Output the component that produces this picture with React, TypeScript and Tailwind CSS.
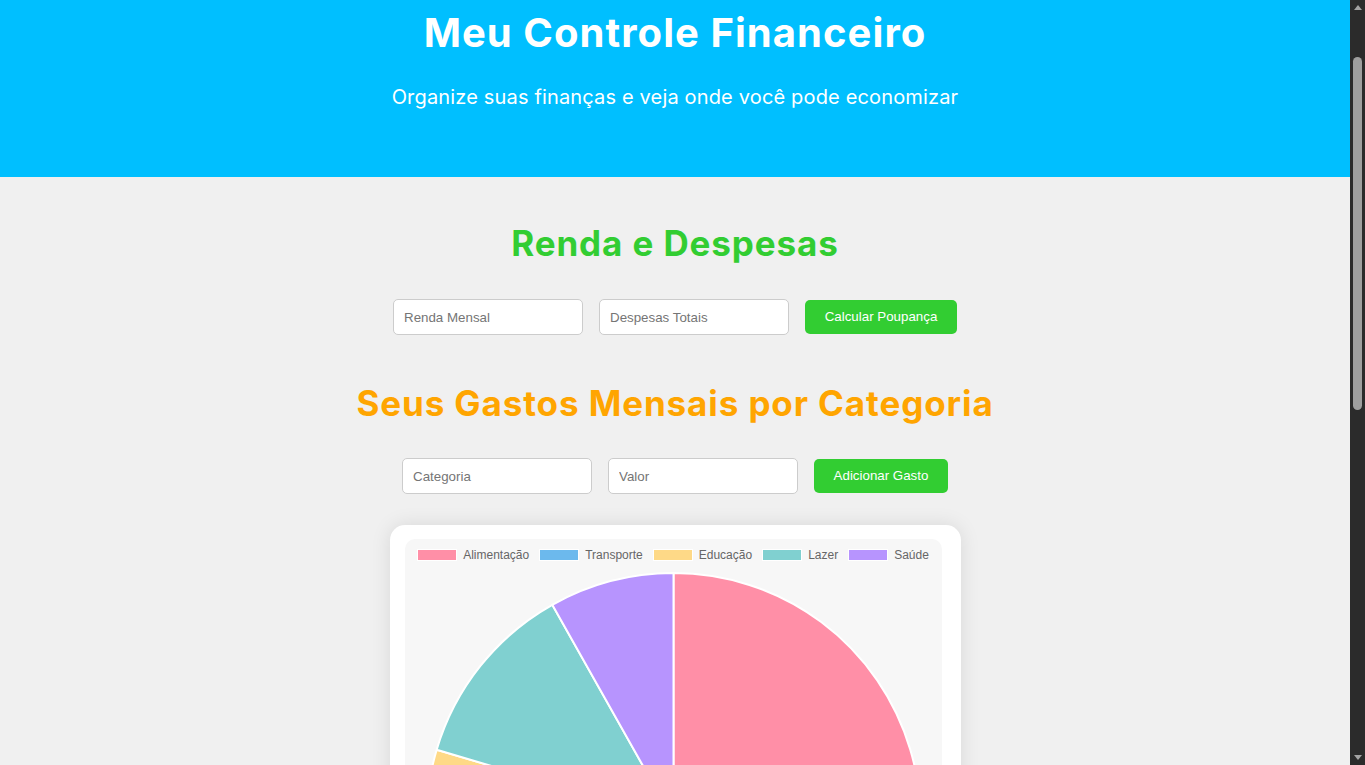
import React from "react";

type Gasto = { categoria: string; valor: number; cor: string };

const gastos: Gasto[] = [
  { categoria: "Alimentação", valor: 1000, cor: "#ff8fa7" },
  { categoria: "Transporte", valor: 500, cor: "#6cb9ed" },
  { categoria: "Educação", valor: 450, cor: "#fed987" },
  { categoria: "Lazer", valor: 300, cor: "#80d0d0" },
  { categoria: "Saúde", valor: 200, cor: "#b794fe" },
];

const PieChart = ({ data }: { data: Gasto[] }) => {
  const cx = 268.5;
  const cy = 249;
  const r = 247;
  const total = data.reduce((s, g) => s + g.valor, 0);
  let start = 0;

  const point = (deg: number) => {
    const rad = ((deg - 90) * Math.PI) / 180;
    return [cx + r * Math.cos(rad), cy + r * Math.sin(rad)];
  };

  return (
    <svg width="537" height="508" viewBox="0 0 537 508" className="block">
      {data.map((g) => {
        const angle = (g.valor / total) * 360;
        const [x1, y1] = point(start);
        const [x2, y2] = point(start + angle);
        const large = angle > 180 ? 1 : 0;
        const d = `M ${cx} ${cy} L ${x1} ${y1} A ${r} ${r} 0 ${large} 1 ${x2} ${y2} Z`;
        start += angle;
        return <path key={g.categoria} d={d} fill={g.cor} stroke="#ffffff" strokeWidth={2} strokeLinejoin="round" />;
      })}
    </svg>
  );
};

const Campo = ({ placeholder }: { placeholder: string }) => (
  <input
    type="text"
    placeholder={placeholder}
    className="w-[190px] h-[36px] px-[10px] bg-white border border-[#cccccc] rounded-[5px] text-[13.33px] text-[#222] placeholder:text-[#757575] font-['Liberation_Sans',Arial,sans-serif] outline-none"
  />
);

// barra de rolagem escura, como no navegador
const Rolagem = () => (
  <aside className="sticky top-0 h-screen w-[15px] shrink-0 bg-[#2b2b2b] flex flex-col items-center">
    <div className="h-[15px] flex items-center justify-center">
      <span className="w-0 h-0 border-x-[4px] border-x-transparent border-b-[5px] border-b-[#a3a3a3]" />
    </div>
    <div className="mt-[42px] w-[9px] h-[353px] rounded-full bg-[#9f9f9f]" />
    <div className="flex-1" />
    <div className="h-[15px] flex items-center justify-center">
      <span className="w-0 h-0 border-x-[4px] border-x-transparent border-t-[5px] border-t-[#a3a3a3]" />
    </div>
  </aside>
);

export default function App() {
  return (
    <div className="h-screen overflow-hidden flex bg-[#f0f0f0] text-[#333]">
      <div className="flex-1 min-w-0">
        <header className="h-[177px] bg-[#00bfff] text-white text-center font-['Inter',sans-serif] pt-[9px]">
          <h1 className="text-[40px] leading-[48px] font-bold tracking-[1.05px]">Meu Controle Financeiro</h1>
          <p className="mt-[25px] text-[20px] leading-[30px] tracking-[0.16px]">
            Organize suas finanças e veja onde você pode economizar
          </p>
        </header>

        <main className="flex flex-col items-center pt-[45px] pb-10">
          <h2 className="text-[35px] leading-[42px] font-bold tracking-[0.9px] text-[#32cd32] font-['Inter',sans-serif]">
            Renda e Despesas
          </h2>
          <div className="flex items-center gap-4 mt-[35px]">
            <Campo placeholder="Renda Mensal" />
            <Campo placeholder="Despesas Totais" />
            <button className="w-[152px] h-[34px] rounded-[5px] bg-[#32cd32] text-white text-[13.33px] font-['Liberation_Sans',Arial,sans-serif] cursor-pointer">
              Calcular Poupança
            </button>
          </div>

          <h2 className="mt-[47px] text-[35px] leading-[42px] font-bold tracking-[0.9px] text-[#ffa500] font-['Inter',sans-serif]">
            Seus Gastos Mensais por Categoria
          </h2>
          <div className="flex items-center gap-4 mt-[34px]">
            <Campo placeholder="Categoria" />
            <Campo placeholder="Valor" />
            <button className="w-[134px] h-[34px] rounded-[5px] bg-[#32cd32] text-white text-[13.33px] font-['Liberation_Sans',Arial,sans-serif] cursor-pointer">
              Adicionar Gasto
            </button>
          </div>

          <div className="mt-[31px] w-[571px] bg-white rounded-[15px] pl-[15px] pr-[19px] pt-[14px] pb-[15px] shadow-[0_0_20px_rgba(0,0,0,0.1)]">
            <div className="bg-[#f7f7f7] rounded-[10px] overflow-hidden">
              <div className="h-[32px] flex items-center justify-center gap-[10px] font-['Liberation_Sans',Arial,sans-serif] text-[12px] text-[#666]">
                {gastos.map((g) => (
                  <div key={g.categoria} className="flex items-center gap-[6px]">
                    <span className="w-[40px] h-[12px] border border-white" style={{ backgroundColor: g.cor }} />
                    <span>{g.categoria}</span>
                  </div>
                ))}
              </div>
              <PieChart data={gastos} />
            </div>
          </div>
        </main>
      </div>
      <Rolagem />
    </div>
  );
}
